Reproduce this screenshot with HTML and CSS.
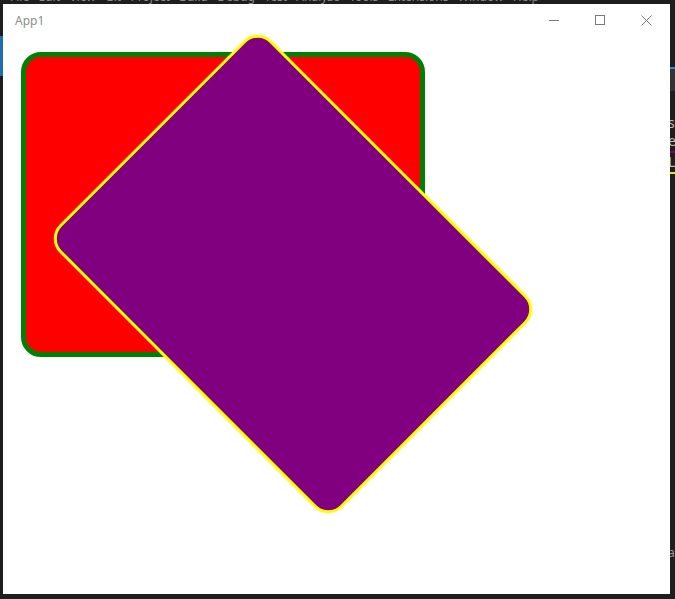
FILE: index.html
```html
<!DOCTYPE html>
<html>
<head>
<meta charset="utf-8">
<link rel="stylesheet" href="styles.css">
</head>
<body>
  <div class="desk-menu">File&nbsp;&nbsp;&nbsp;Edit&nbsp;&nbsp;&nbsp;View&nbsp;&nbsp;&nbsp;Git&nbsp;&nbsp;&nbsp;Project&nbsp;&nbsp;&nbsp;Build&nbsp;&nbsp;&nbsp;Debug&nbsp;&nbsp;&nbsp;Test&nbsp;&nbsp;&nbsp;Analyze&nbsp;&nbsp;&nbsp;Tools&nbsp;&nbsp;&nbsp;Extensions&nbsp;&nbsp;&nbsp;Window&nbsp;&nbsp;&nbsp;Help</div>
  <div class="desk-bit blue-left"></div>
  <div class="desk-bit blue-right"></div>
  <div class="desk-bit grey-right"></div>
  <div class="desk-glyph g1">s</div>
  <div class="desk-glyph g2">e</div>
  <div class="desk-bit purple-right"></div>
  <div class="desk-glyph g3">L</div>
  <div class="desk-bit yellow-right"></div>
  <div class="desk-glyph g4">a</div>

  <div class="window">
    <div class="titlebar">
      <span class="title">App1</span>
      <div class="caption">
        <div class="cap-btn">
          <svg width="10" height="10" viewBox="0 0 10 10"><path d="M0 5.5H10" stroke="#7a7a7a" stroke-width="1" fill="none"/></svg>
        </div>
        <div class="cap-btn">
          <svg width="10" height="10" viewBox="0 0 10 10"><rect x="0.5" y="0.5" width="9" height="9" stroke="#7a7a7a" stroke-width="1" fill="none"/></svg>
        </div>
        <div class="cap-btn">
          <svg width="11" height="11" viewBox="0 0 11 11"><path d="M0.5 0.5L10.5 10.5M10.5 0.5L0.5 10.5" stroke="#7a7a7a" stroke-width="1" fill="none"/></svg>
        </div>
      </div>
    </div>
    <div class="content">
      <div class="red-box"></div>
    </div>
    <div class="purple-box"></div>
  </div>
</body>
</html>
```
FILE: styles.css
```css
html, body {
  margin: 0;
  padding: 0;
}
body {
  width: 675px;
  height: 599px;
  background: #1e1e1e;
  position: relative;
  overflow: hidden;
  font-family: "Noto Sans", "Open Sans", sans-serif;
}
.desk-menu {
  position: absolute;
  left: 10px;
  top: -10px;
  font-size: 12px;
  line-height: 14px;
  color: #8a8a8a;
  white-space: nowrap;
}
.desk-bit {
  position: absolute;
}
.blue-left {
  left: 0;
  top: 36px;
  width: 3px;
  height: 40px;
  background: #1f6fb0;
}
.blue-right {
  left: 670px;
  top: 67px;
  width: 5px;
  height: 2px;
  background: #2a8ad4;
}
.grey-right {
  left: 670px;
  top: 69px;
  width: 5px;
  height: 22px;
  background: #333337;
}
.purple-right {
  left: 670px;
  top: 151px;
  width: 5px;
  height: 2px;
  background: #800080;
}
.yellow-right {
  left: 670px;
  top: 172px;
  width: 5px;
  height: 2px;
  background: #e8e800;
}
.desk-glyph {
  position: absolute;
  left: 668px;
  font-size: 14px;
  line-height: 14px;
  color: #bdbdbd;
}
.g1 { top: 116px; }
.g2 { top: 134px; }
.g3 { top: 155px; }
.g4 { top: 546px; font-size: 12px; color: #9a9a9a; }

.window {
  position: absolute;
  left: 3px;
  top: 4px;
  width: 667px;
  height: 590px;
  background: #ffffff;
  overflow: hidden;
}
.titlebar {
  height: 32px;
  display: flex;
  align-items: center;
  padding-left: 12px;
}
.title {
  font-size: 12px;
  color: #8c8c8c;
}
.caption {
  margin-left: auto;
  display: flex;
  padding-right: 1px;
}
.cap-btn {
  width: 46px;
  height: 32px;
  display: flex;
  align-items: center;
  justify-content: center;
}
.cap-btn svg {
  display: block;
}
.content {
  padding: 16px 0 0 18px;
}
.red-box {
  width: 404px;
  height: 305px;
  box-sizing: border-box;
  background: #ff0000;
  border: 5px solid #008000;
  border-radius: 20px;
}
.purple-box {
  position: absolute;
  left: 89.6px;
  top: 119.5px;
  width: 400px;
  height: 300px;
  box-sizing: border-box;
  background: #800080;
  border: 3px solid #ffff00;
  border-radius: 20px;
  transform: rotate(45deg);
}
```
